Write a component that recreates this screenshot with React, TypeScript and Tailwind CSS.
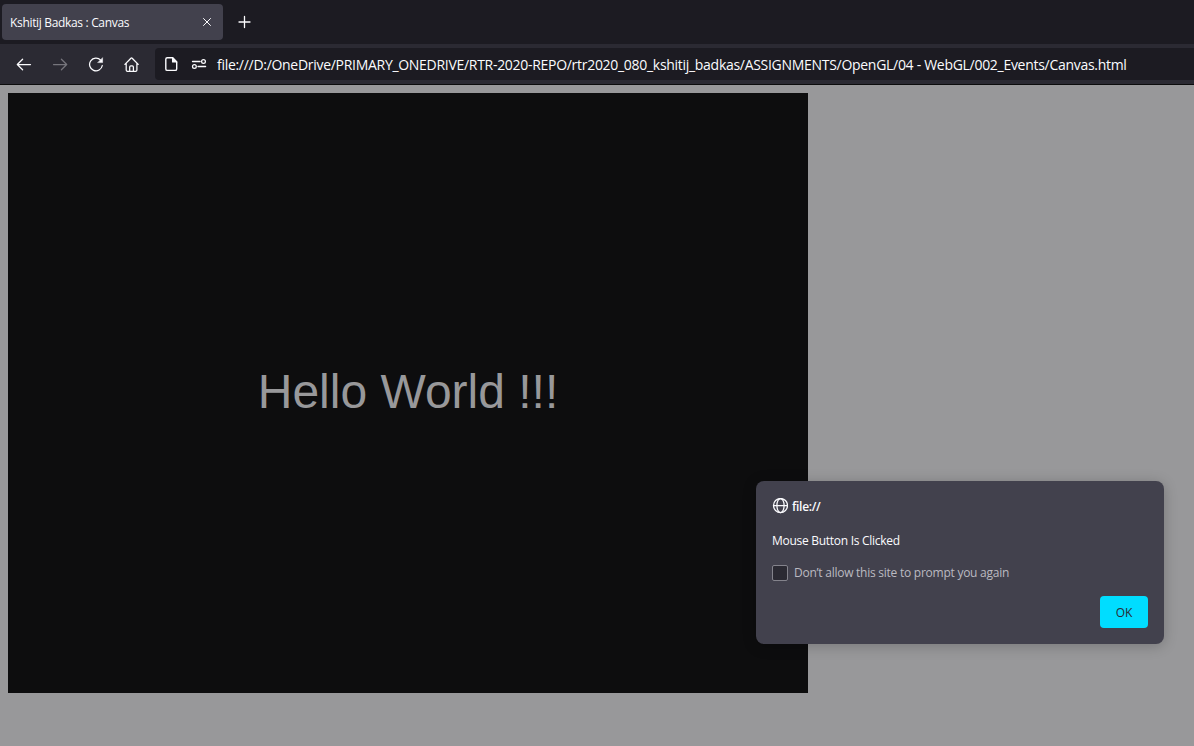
import type { ReactNode } from "react";

const URL_TEXT =
  "file:///D:/OneDrive/PRIMARY_ONEDRIVE/RTR-2020-REPO/rtr2020_080_kshitij_badkas/ASSIGNMENTS/OpenGL/04 - WebGL/002_Events/Canvas.html";

function Icon({ children, className = "" }: { children: ReactNode; className?: string }) {
  return (
    <svg
      viewBox="0 0 16 16"
      className={`h-4 w-4 shrink-0 ${className}`}
      fill="none"
      stroke="currentColor"
      strokeWidth="1.25"
      strokeLinecap="round"
      strokeLinejoin="round"
    >
      {children}
    </svg>
  );
}

function TabStrip() {
  return (
    <div className="flex h-11 shrink-0 items-center bg-[#1c1b22] pb-px pl-0.5">
      <div className="mt-px flex h-9 w-[221px] items-center justify-between rounded bg-[#42414d] pr-2 pl-2">
        <span className="pt-0.5 text-[12px] tracking-[-0.33px] whitespace-pre">Kshitij Badkas : Canvas</span>
        <Icon>
          <path d="M4.5 4.5l7 7M11.5 4.5l-7 7" strokeWidth="1" />
        </Icon>
      </div>
      <Icon className="ml-[14px]">
        <path d="M7.5 2.5v11M2 8h11" strokeWidth="1.3" />
      </Icon>
    </div>
  );
}

function NavBar() {
  return (
    <div className="flex h-[41px] shrink-0 items-center border-b border-[#0c0c0d] bg-[#2b2a33] pl-4">
      <div className="flex gap-5">
        <Icon>
          <path d="M14.5 8.5h-13M6.6 3.2L1.3 8.5l5.3 5.3" />
        </Icon>
        <Icon className="text-[#76757c]">
          <path d="M1.5 8.5h13M9.4 3.2l5.3 5.3-5.3 5.3" />
        </Icon>
        <Icon>
          <path d="M14.3 9.5a6.4 6.4 0 1 1-1.6-5.4" />
          <path d="M14.6 2v4.6H10z" fill="currentColor" strokeWidth="0.5" />
        </Icon>
        <Icon>
          <path d="M.9 8.4l6-6.2a.9.9 0 0 1 1.3 0l6 6.2M2.2 7.4v6.7a1.3 1.3 0 0 0 1.3 1.3h8.1a1.3 1.3 0 0 0 1.3-1.3V7.4M5.7 15.1v-4.2a1.1 1.1 0 0 1 1.1-1.1h1.5a1.1 1.1 0 0 1 1.1 1.1v4.2" />
        </Icon>
      </div>
      <div className="ml-[15px] flex h-8 flex-1 items-center rounded-l bg-[#1c1b22] pl-2">
        <Icon>
          <path d="M9.6 1.8H4.3a1.5 1.5 0 0 0-1.5 1.5v9.6a1.5 1.5 0 0 0 1.5 1.5h7.9a1.5 1.5 0 0 0 1.5-1.5V5.9z" strokeWidth="1.4" />
          <path d="M9.6 1.8v4.1h4.1z" fill="currentColor" />
        </Icon>
        <Icon className="ml-3">
          <path d="M1.5 5.5h7.6M7 10.5h7.6" strokeWidth="1.3" />
          <circle cx="12.5" cy="5.4" r="1.9" />
          <circle cx="3.4" cy="10.5" r="1.9" />
        </Icon>
        <span className="ml-[10px] pt-px text-[14px] tracking-[-0.292px] whitespace-pre">{URL_TEXT}</span>
      </div>
    </div>
  );
}

function PromptDialog() {
  return (
    <div
      role="dialog"
      className="absolute top-[396px] left-[756px] flex h-[163px] w-[408px] flex-col rounded-lg bg-[#42414d] p-4 text-[12px] shadow-[0_2px_14px_rgba(0,0,0,0.22)]"
    >
      <div className="flex h-[18px] items-center gap-1">
        <Icon>
          <circle cx="8.5" cy="7.5" r="7" />
          <ellipse cx="8.5" cy="7.5" rx="3.6" ry="7" />
          <path d="M1.5 7.5h14" />
        </Icon>
        <span className="pt-px font-semibold tracking-[-0.3px]">file://</span>
      </div>
      <div className="mt-[17px] h-[18px] leading-[18px] tracking-[-0.28px]">Mouse Button Is Clicked</div>
      <label className="mt-[15px] flex h-4 items-center gap-1.5 text-[#bbbac1]">
        <span className="h-4 w-4 rounded-xs border border-[#84838c] bg-[#2b2a33]" />
        <span className="tracking-[-0.25px]">Don’t allow this site to prompt you again</span>
      </label>
      <button className="mt-auto h-8 w-12 self-end rounded bg-[#00ddff] pt-0.5 text-[#2b2a33]">OK</button>
    </div>
  );
}

export default function App() {
  return (
    <div className="flex h-[746px] w-[1194px] flex-col overflow-hidden font-['Open_Sans','Noto_Sans',sans-serif] text-[#fbfbfe]">
      <TabStrip />
      <NavBar />
      <main className="relative flex-1 bg-[#98989a] p-2">
        <div className="flex h-[600px] w-[800px] items-center justify-center bg-[#0d0d0e] pb-0.5 font-['Liberation_Sans',sans-serif] text-[48px] leading-none text-[#98989a]">
          <span className="whitespace-pre">Hello World !!!</span>
        </div>
        <PromptDialog />
      </main>
    </div>
  );
}
